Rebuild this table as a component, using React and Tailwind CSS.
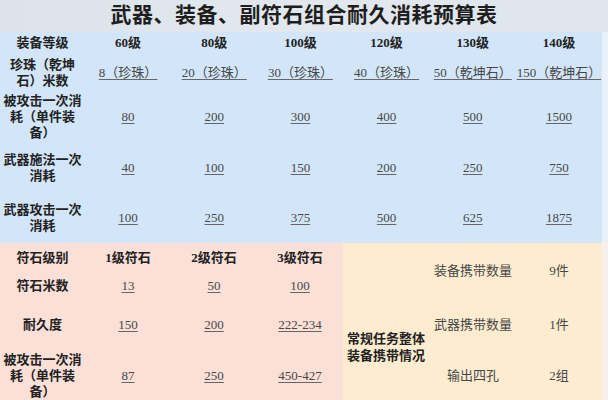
import React from "react";

const serif = { fontFamily: '"Liberation Serif", "Noto Sans CJK SC", serif' };

const levels = ["60级", "80级", "100级", "120级", "130级", "140级"];

const blueRows = [
  { label: ["珍珠（乾坤", "石）米数"], h: "h-[39px]", vals: ["8（珍珠）", "20（珍珠）", "30（珍珠）", "40（珍珠）", "50（乾坤石）", "150（乾坤石）"] },
  { label: ["被攻击一次消", "耗（单件装", "备）"], h: "h-[50px]", vals: ["80", "200", "300", "400", "500", "1500"] },
  { label: ["武器施法一次", "消耗"], h: "h-[51px]", vals: ["40", "100", "150", "200", "250", "750"] },
  { label: ["武器攻击一次", "消耗"], h: "h-[50px]", vals: ["100", "250", "375", "500", "625", "1875"] },
];

const pinkRows = [
  { label: ["符石米数"], h: "h-[27px]", vals: ["13", "50", "100"] },
  { label: ["耐久度"], h: "h-[52px]", vals: ["150", "200", "222-234"] },
  { label: ["被攻击一次消", "耗（单件装", "备）"], h: "h-[50px]", vals: ["87", "250", "450-427"] },
];

const carry = [
  { name: "装备携带数量", n: "9件", h: "h-[56px]" },
  { name: "武器携带数量", n: "1件", h: "h-[51px]" },
  { name: "输出四孔", n: "2组", h: "h-[50px]" },
];

function Label({ lines }) {
  return (
    <div className="flex flex-col items-center justify-center font-bold text-[#222] leading-[16px]">
      {lines.map((l) => (
        <span key={l}>{l}</span>
      ))}
    </div>
  );
}

function Val({ children }) {
  return (
    <div className="flex items-center justify-center">
      <span className="underline underline-offset-2 decoration-[#666] text-[#474747]">{children}</span>
    </div>
  );
}

export default function App() {
  return (
    <div className="w-[608px] h-[400px] overflow-hidden text-[13px]" style={serif}>
      <div className="h-8 flex items-center justify-center bg-gradient-to-r from-[#dce3ea] via-[#e2e8ee] to-[#dfe5ec]">
        <h1 className="text-[21px] font-bold text-[#1e1e1e] tracking-[0.5px]">
          武器、装备、副符石组合耐久消耗预算表
        </h1>
      </div>
      <div className="flex">
        <div className="w-[602px]">
          <div className="bg-[#d3e6f9] grid grid-cols-[85px_repeat(6,1fr)]">
            <div className="h-[21px] flex items-center justify-center font-bold text-[#222]">装备等级</div>
            {levels.map((l) => (
              <div key={l} className="h-[21px] flex items-center justify-center font-bold text-[#222]">
                {l}
              </div>
            ))}
            {blueRows.map((r) => (
              <React.Fragment key={r.label[0] + r.vals[0]}>
                <div className={`${r.h} flex items-center justify-center`}>
                  <Label lines={r.label} />
                </div>
                {r.vals.map((v, i) => (
                  <Val key={i}>{v}</Val>
                ))}
              </React.Fragment>
            ))}
          </div>
          <div className="flex">
            <div className="w-[343px] bg-[#fbe0d8] grid grid-cols-[85px_repeat(3,1fr)]">
              <div className="h-[29px] flex items-center justify-center font-bold text-[#222]">符石级别</div>
              {["1级符石", "2级符石", "3级符石"].map((l) => (
                <div key={l} className="h-[29px] flex items-center justify-center font-bold text-[#222]">
                  {l}
                </div>
              ))}
              {pinkRows.map((r) => (
                <React.Fragment key={r.label[0] + r.vals[0]}>
                  <div className={`${r.h} flex items-center justify-center`}>
                    <Label lines={r.label} />
                  </div>
                  {r.vals.map((v, i) => (
                    <Val key={i}>{v}</Val>
                  ))}
                </React.Fragment>
              ))}
            </div>
            <div className="flex-1 bg-[#fdecd0] grid grid-cols-[87px_1fr_1fr]">
              <div className="row-span-3 flex items-center pl-1 pt-[50px] font-bold text-[#222] leading-[17px]">
                <div className="flex flex-col">
                  <span>常规任务整体</span>
                  <span>装备携带情况</span>
                </div>
              </div>
              {carry.map((c) => (
                <React.Fragment key={c.name}>
                  <div className={`${c.h} flex items-center justify-center text-[#484848]`}>{c.name}</div>
                  <div className={`${c.h} flex items-center justify-center text-[#484848]`}>{c.n}</div>
                </React.Fragment>
              ))}
            </div>
          </div>
        </div>
        <div className="flex-1 flex flex-col">
          <div className="h-[211px] bg-[#eaf1f8]" />
          <div className="flex-1 bg-[#f6f1ea]" />
        </div>
      </div>
    </div>
  );
}
